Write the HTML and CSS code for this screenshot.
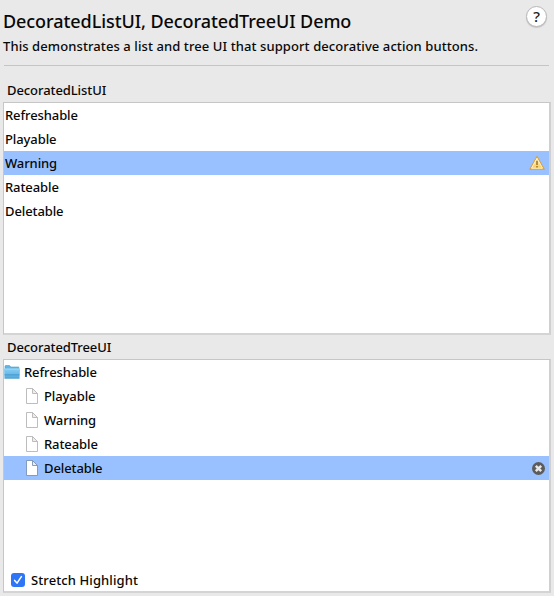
FILE: index.html
```html
<!DOCTYPE html>
<html lang="en">
<head>
<meta charset="utf-8">
<title>DecoratedListUI, DecoratedTreeUI Demo</title>
<link rel="stylesheet" href="styles.css">
</head>
<body>
<header class="header">
  <div class="heading">
    <h1 class="title"><span>DecoratedListUI, DecoratedTreeUI Demo</span></h1>
    <p class="subtitle"><span>This demonstrates a list and tree UI that support decorative action buttons.</span></p>
  </div>
  <button class="help" aria-label="Help">?</button>
</header>
<h2 class="label label-list"><span>DecoratedListUI</span></h2>
<ul class="panel list">
  <li class="row"><span>Refreshable</span></li>
  <li class="row"><span>Playable</span></li>
  <li class="row selected"><span>Warning</span>
    <svg class="action warning" width="16" height="16" viewBox="0 0 16 16">
      <defs><linearGradient id="amber" x1="0" y1="0" x2="0" y2="1"><stop offset="0" stop-color="#fff8df"/><stop offset="1" stop-color="#f6c858"/></linearGradient></defs>
      <path d="M8 1.5 15.2 14.2H.8Z" fill="url(#amber)" stroke="#d6a044" stroke-width="1.2" stroke-linejoin="round"/>
      <path d="M8 3.4 13.5 13.2H2.5Z" fill="none" stroke="#fff3c4" stroke-width="1"/>
      <path d="M8 5.8V10M8 11v1.5" stroke="#a8801f" stroke-width="1.7"/>
    </svg>
  </li>
  <li class="row"><span>Rateable</span></li>
  <li class="row"><span>Deletable</span></li>
</ul>
<h2 class="label label-tree"><span>DecoratedTreeUI</span></h2>
<section class="panel tree-panel">
  <ul class="tree">
    <li class="row root">
      <svg class="folder" width="16" height="16" viewBox="0 0 16 16">
        <defs><linearGradient id="blue" x1="0" y1="0" x2="0" y2="1"><stop offset="0" stop-color="#88cdf3"/><stop offset=".52" stop-color="#6cbbe8"/><stop offset=".55" stop-color="#4ba2d5"/><stop offset="1" stop-color="#67b8e5"/></linearGradient></defs>
        <path d="M1 5V2.3Q1 1.5 1.8 1.5H5.5L6.8 3H14.5Q15 3 15 4V6H1Z" fill="#62b3df" stroke="#4b9dce" stroke-width=".6"/>
        <path d="M0 4.8H16L15.5 14.3H.5Z" fill="url(#blue)"/>
        <path d="M.3 5H15.7" stroke="#a7def8" stroke-width=".8"/>
        <path d="M.5 14.2H15.5" stroke="#348bbd" stroke-width=".8"/>
      </svg><span>Refreshable</span>
    </li>
    <li class="row child"><svg class="file" width="14" height="16" viewBox="0 0 14 16"><path d="M1.5.5H7.5L12.5 5.5V15.5H1.5Z"/><path d="M7.5.5V5.5H12.5Z" class="fold"/></svg><span>Playable</span></li>
    <li class="row child"><svg class="file" width="14" height="16" viewBox="0 0 14 16"><path d="M1.5.5H7.5L12.5 5.5V15.5H1.5Z"/><path d="M7.5.5V5.5H12.5Z" class="fold"/></svg><span>Warning</span></li>
    <li class="row child"><svg class="file" width="14" height="16" viewBox="0 0 14 16"><path d="M1.5.5H7.5L12.5 5.5V15.5H1.5Z"/><path d="M7.5.5V5.5H12.5Z" class="fold"/></svg><span>Rateable</span></li>
    <li class="row child selected"><svg class="file" width="14" height="16" viewBox="0 0 14 16"><path d="M1.5.5H7.5L12.5 5.5V15.5H1.5Z"/><path d="M7.5.5V5.5H12.5Z" class="fold"/></svg><span>Deletable</span>
      <svg class="action delete" width="13" height="13" viewBox="0 0 12 12"><circle cx="6" cy="6" r="6" fill="#5c5c5c"/><path d="M3.5 3.5 8.5 8.5M8.5 3.5 3.5 8.5" stroke="#e8e8e8" stroke-width="2.3"/></svg>
    </li>
  </ul>
  <div class="option">
    <svg width="14" height="14" viewBox="0 0 14 14"><rect width="14" height="14" rx="3" fill="#2f76f6"/><path d="M3.6 7.4 6 10.1 10.4 3.6" fill="none" stroke="#fff" stroke-width="1.5" stroke-linecap="round" stroke-linejoin="round"/></svg>
    <span>Stretch Highlight</span>
  </div>
</section>
</body>
</html>
```
FILE: styles.css
```css
* { box-sizing: border-box; }
body {
  margin: 0;
  height: 596px;
  padding: 0 3px;
  overflow: hidden;
  background: #e9e9e9;
  color: #080808;
  font: 500 13px/24px "Noto Sans", "Open Sans", sans-serif;
}
h1, h2, p, ul { margin: 0; padding: 0; font-weight: 500; }
ul { list-style: none; }
.header {
  display: flex;
  justify-content: space-between;
  height: 66px;
  margin: 0 2px 0 1px;
  border-bottom: 1px solid #c5c5c5;
}
.heading { padding-top: 9px; margin-left: -2px; white-space: nowrap; }
.title { font-size: 18px; line-height: 25px; letter-spacing: -0.07px; }
.subtitle { padding-left: 1px; line-height: 24px; letter-spacing: 0.09px; }
.title { padding-left: 1px; }
.help {
  width: 21px;
  height: 21px;
  margin: 6px 2px 0 0;
  padding: 0;
  border: 1px solid #b8b8b8;
  border-radius: 50%;
  background: #fff;
  box-shadow: 0 1px 1px #c4c4c4;
  color: #222;
  font: 500 15px/19px "Noto Sans", sans-serif;
}
.label { padding-left: 4px; font-size: 13px; letter-spacing: -0.08px; }
.label-list { height: 36px; padding-top: 12px; }
.label-tree { height: 24px; line-height: 25px; }
.panel {
  width: 548px;
  border: 1px solid #c6c6c6;
  border-right: 2px solid #d0d0d0;
  border-bottom: 2px solid #d4d4d4;
  background: #fff;
}
.list { height: 233px; }
.tree-panel { display: flex; flex-direction: column; justify-content: space-between; height: 234px; }
.row { display: flex; align-items: center; height: 24px; padding-left: 1px; letter-spacing: -0.1px; }
.selected { background: #99c1ff; }
.action { margin-left: auto; }
.warning { margin-right: 4px; }
.delete { margin-right: 4px; }
.root { padding-left: 0; gap: 4px; }
.child { padding-left: 21px; gap: 5px; }
.file { fill: #fff; stroke: #b5b5b5; stroke-width: .9; }
.selected .file { stroke: #7993b8; }
.fold { fill: #eee; }
.option { display: flex; align-items: center; gap: 6px; height: 22px; padding-left: 7px; letter-spacing: 0.1px; }
```
